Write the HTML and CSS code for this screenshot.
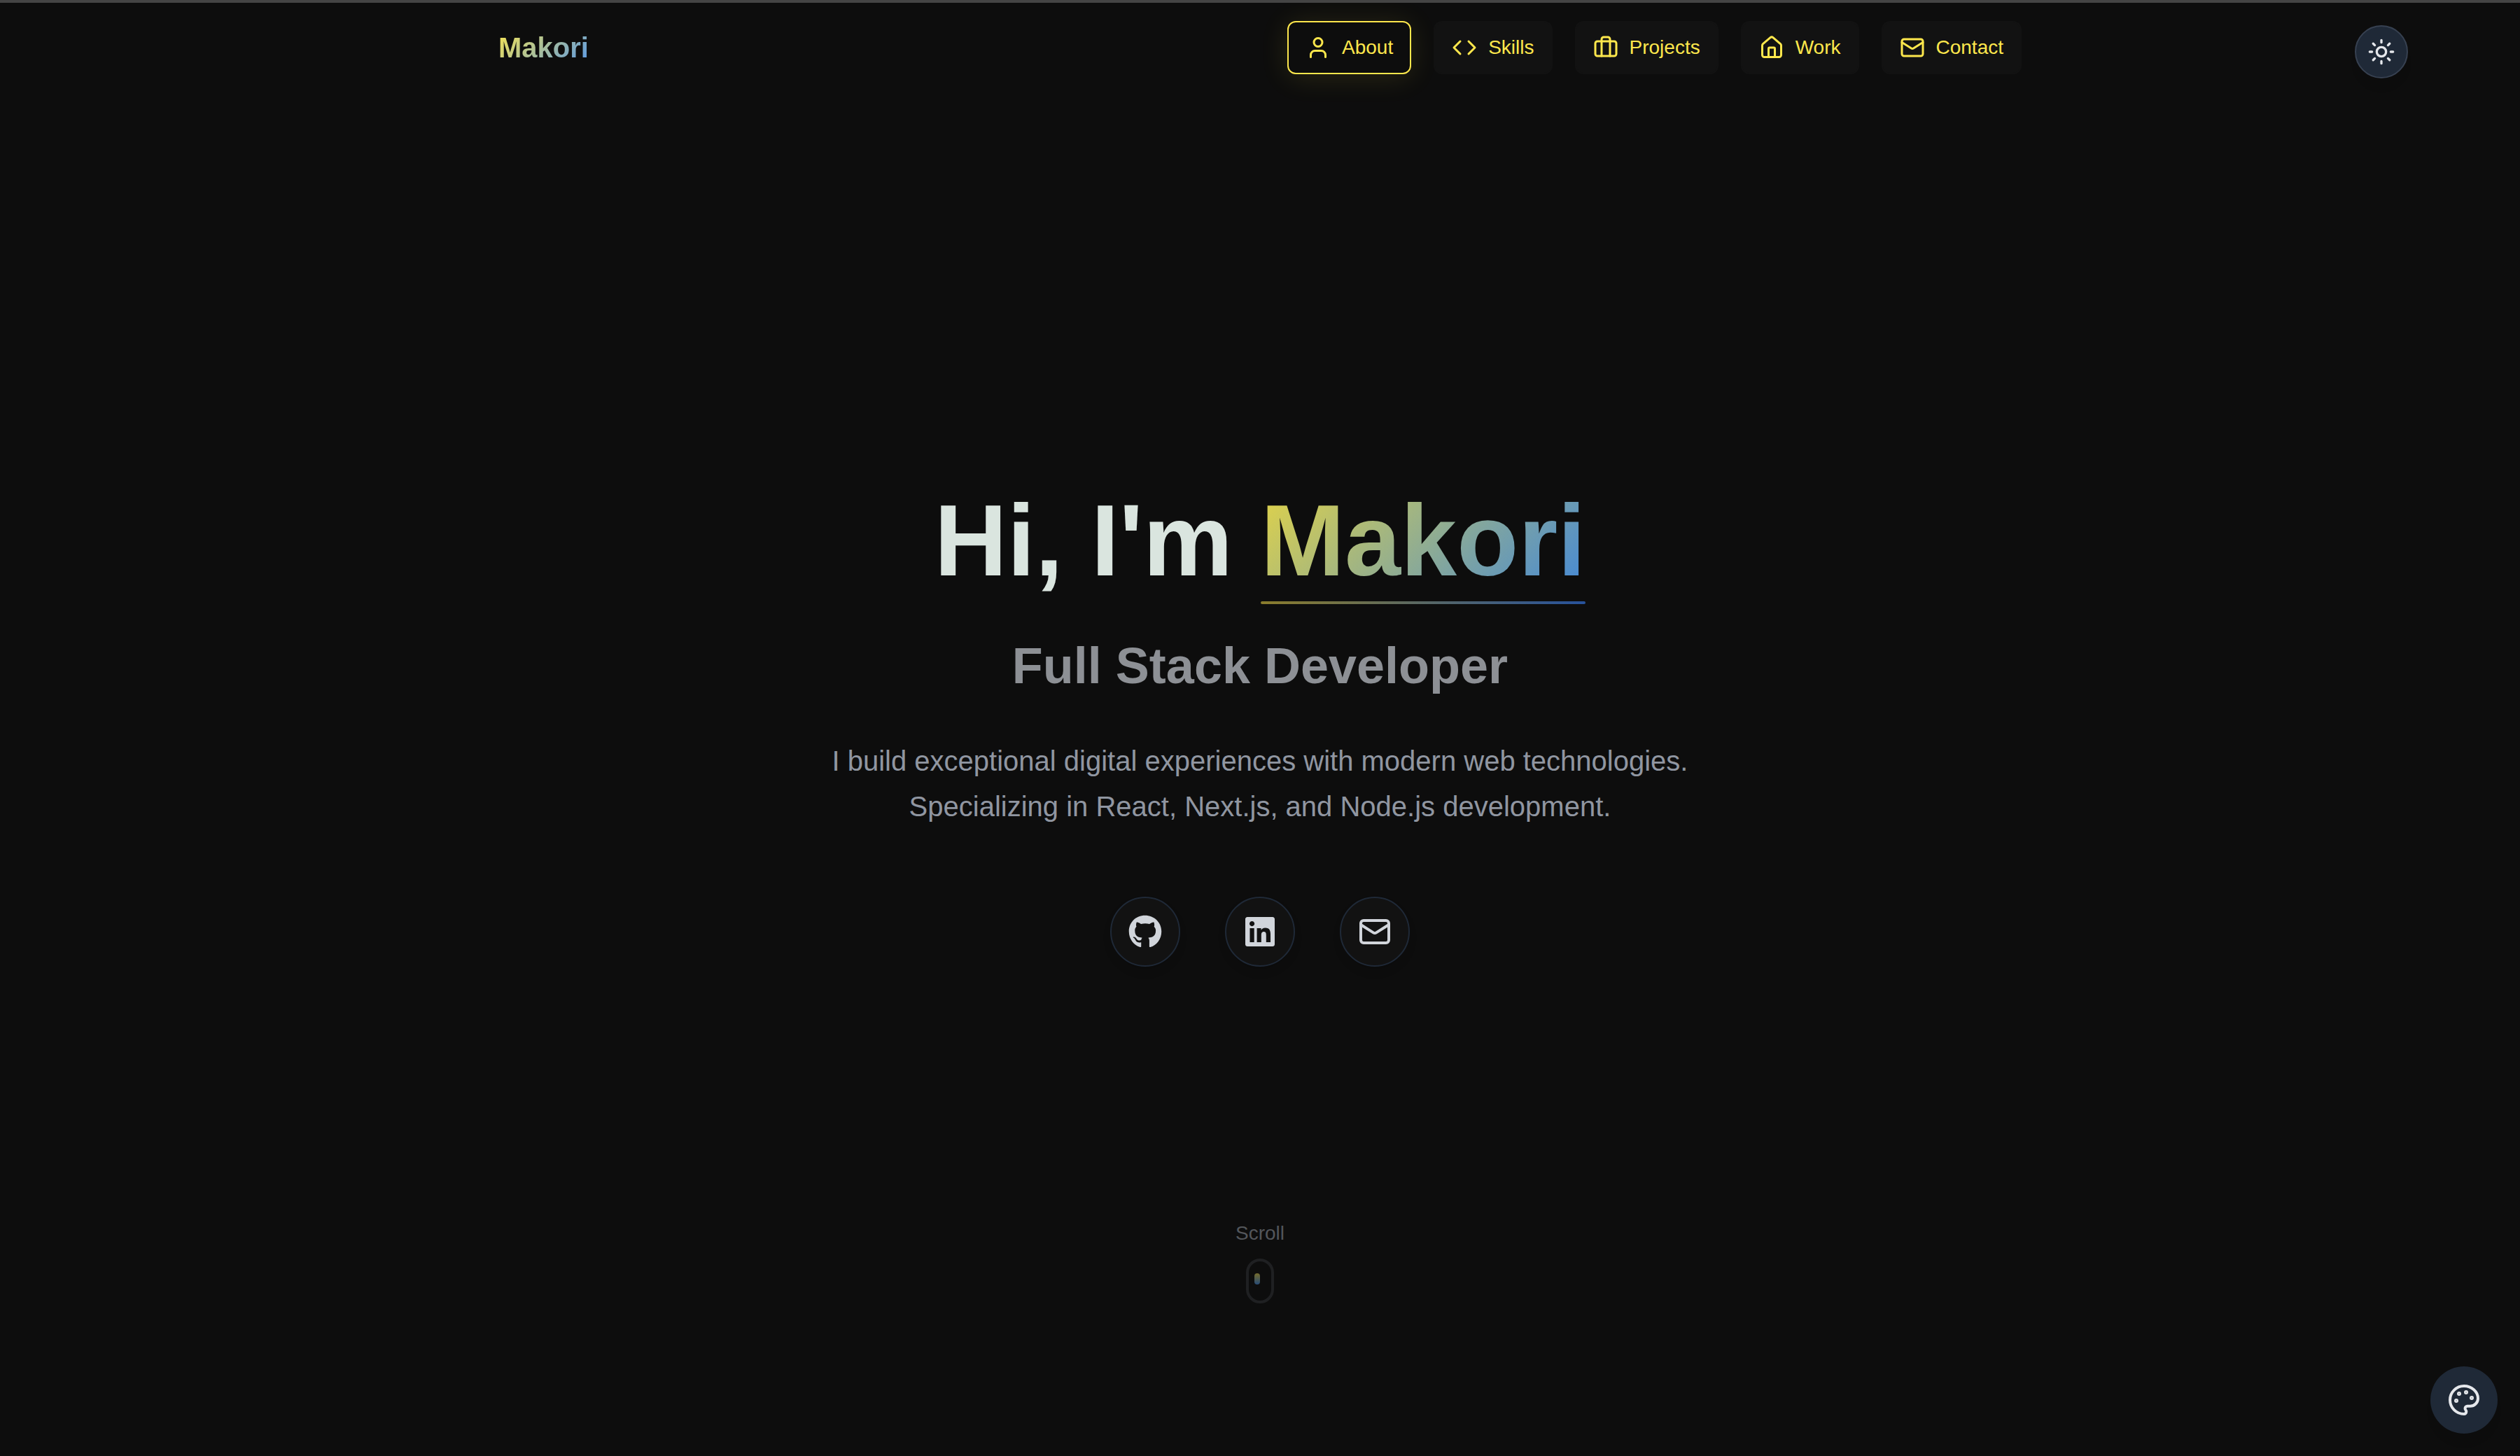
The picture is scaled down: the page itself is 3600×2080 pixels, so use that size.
FILE: index.html
```html
<!DOCTYPE html>
<html lang="en">
<head>
<meta charset="utf-8">
<meta name="viewport" content="width=device-width, initial-scale=1">
<title>Makori</title>
<link rel="stylesheet" href="styles.css">
</head>
<body>
<header class="header">
  <div class="header-inner">
    <a class="logo" href="#">Makori</a>
    <nav class="nav">
      <a class="nav-link active" href="#about">
        <svg class="icon" viewBox="0 0 24 24"><path d="M19 21v-2a4 4 0 0 0-4-4H9a4 4 0 0 0-4 4v2"/><circle cx="12" cy="7" r="4"/></svg>
        About
      </a>
      <a class="nav-link" href="#skills">
        <svg class="icon" viewBox="0 0 24 24"><path d="m16 18 6-6-6-6M8 6l-6 6 6 6"/></svg>
        Skills
      </a>
      <a class="nav-link" href="#projects">
        <svg class="icon" viewBox="0 0 24 24"><path d="M16 20V4a2 2 0 0 0-2-2h-4a2 2 0 0 0-2 2v16"/><rect x="2" y="6" width="20" height="14" rx="2"/></svg>
        Projects
      </a>
      <a class="nav-link" href="#work">
        <svg class="icon" viewBox="0 0 24 24"><path d="M15 21v-8a1 1 0 0 0-1-1h-4a1 1 0 0 0-1 1v8"/><path d="M3 10a2 2 0 0 1 .709-1.528l7-5.999a2 2 0 0 1 2.582 0l7 5.999A2 2 0 0 1 21 10v9a2 2 0 0 1-2 2H5a2 2 0 0 1-2-2z"/></svg>
        Work
      </a>
      <a class="nav-link" href="#contact">
        <svg class="icon" viewBox="0 0 24 24"><rect x="2" y="4" width="20" height="16" rx="2"/><path d="m22 7-8.97 5.7a1.94 1.94 0 0 1-2.06 0L2 7"/></svg>
        Contact
      </a>
    </nav>
  </div>
</header>
<main class="hero">
  <h1 class="title">Hi, I'm <span class="name">Makori</span></h1>
  <h2 class="role">Full Stack Developer</h2>
  <p class="intro">I build exceptional digital experiences with modern web technologies. Specializing in React, Next.js, and Node.js development.</p>
  <div class="socials">
    <a class="social" href="#github" aria-label="GitHub">
      <svg class="icon solid" viewBox="-8 0 512 512"><path d="M244.800 8C106.100 8 0 113.300 0 252c0 110.900 69.800 205.800 169.500 239.200 12.800 2.300 17.300-5.600 17.300-12.100 0-6.200-.3-40.400-.3-61.400 0 0-70 15-84.700-29.800 0 0-11.400-29.100-27.800-36.600 0 0-22.900-15.700 1.600-15.400 0 0 24.900 2 38.600 25.800 21.900 38.600 58.600 27.500 72.900 20.900 2.300-16 8.800-27.100 16-33.700-55.900-6.200-112.300-14.300-112.300-110.500 0-27.500 7.600-41.300 23.600-58.900-2.600-6.500-11.100-33.300 2.600-67.900 20.900-6.500 69 27 69 27 20-5.600 41.500-8.500 62.800-8.500s42.800 2.900 62.800 8.500c0 0 48.100-33.600 69-27 13.700 34.700 5.200 61.400 2.600 67.900 16 17.700 25.800 31.500 25.800 58.900 0 96.500-58.900 104.200-114.800 110.500 9.200 7.900 17 22.900 17 46.400 0 33.700-.3 75.400-.3 83.600 0 6.500 4.600 14.400 17.300 12.100C428.200 457.800 496 362.900 496 252 496 113.300 383.500 8 244.800 8z"/></svg>
    </a>
    <a class="social" href="#linkedin" aria-label="LinkedIn">
      <svg class="icon solid" viewBox="-32 0 512 512"><path d="M416 32H31.900C14.300 32 0 46.500 0 64.300v383.400C0 465.500 14.300 480 31.900 480H416c17.600 0 32-14.500 32-32.300V64.300c0-17.800-14.400-32.300-32-32.300zM135.400 416H69V202.200h66.500V416zm-33.200-243c-21.300 0-38.500-17.300-38.500-38.500S80.900 96 102.200 96c21.200 0 38.500 17.300 38.500 38.500 0 21.300-17.200 38.500-38.500 38.500zm282.100 243h-66.400V312c0-24.800-.5-56.700-34.500-56.700-34.600 0-39.900 27-39.900 54.900V416h-66.400V202.200h63.700v29.200h.9c8.900-16.800 30.600-34.500 62.900-34.500 67.200 0 79.700 44.300 79.700 101.900V416z"/></svg>
    </a>
    <a class="social" href="#email" aria-label="Email">
      <svg class="icon" viewBox="0 0 24 24"><rect x="2" y="4" width="20" height="16" rx="2"/><path d="m22 7-8.97 5.7a1.94 1.94 0 0 1-2.06 0L2 7"/></svg>
    </a>
  </div>
</main>
<a class="scroll" href="#about">Scroll<span class="mouse"><span class="wheel"></span></span></a>
<button class="theme" type="button" aria-label="Toggle theme">
  <svg class="icon" viewBox="0 0 24 24"><circle cx="12" cy="12" r="4"/><path d="M12 2v2M12 20v2M4.93 4.93l1.41 1.41M17.66 17.66l1.41 1.41M2 12h2M20 12h2M6.34 17.66l-1.41 1.41M19.07 4.93l-1.41 1.41"/></svg>
</button>
<button class="palette" type="button" aria-label="Choose colours">
  <svg class="icon" viewBox="0 0 24 24"><g fill="currentColor"><circle cx="13.5" cy="6.5" r=".5"/><circle cx="17.5" cy="10.5" r=".5"/><circle cx="8.5" cy="7.5" r=".5"/><circle cx="6.5" cy="12.5" r=".5"/></g><path d="M12 2C6.5 2 2 6.5 2 12s4.5 10 10 10c.926 0 1.648-.746 1.648-1.688 0-.437-.18-.835-.437-1.125-.29-.289-.438-.652-.438-1.125a1.64 1.64 0 0 1 1.668-1.668h1.996c3.051 0 5.555-2.503 5.555-5.554C21.965 6.012 17.461 2 12 2z"/></svg>
</button>
</body>
</html>
```
FILE: styles.css
```css
* { box-sizing: border-box; }

body {
  display: flex;
  flex-direction: column;
  min-height: 100vh;
  margin: 0;
  border-top: 4px solid #444;
  background: #0d0d0d;
  color: #dae5df;
  font-family: "Liberation Sans", Arial, sans-serif;
}

a { color: inherit; text-decoration: none; }

.icon {
  display: block;
  width: 36px;
  height: 36px;
  fill: none;
  stroke: currentColor;
  stroke-width: 2;
  stroke-linecap: round;
  stroke-linejoin: round;
}

.icon.solid { fill: currentColor; stroke: none; }

.header { padding: 26px 64px; }

.header-inner {
  display: flex;
  align-items: center;
  justify-content: space-between;
  max-width: 2176px;
  margin: 0 auto;
}

.logo {
  background: linear-gradient(135deg, #fae650, #5596ea);
  background-clip: text;
  -webkit-background-clip: text;
  color: transparent;
  font-size: 40px;
  font-weight: 700;
  line-height: 56px;
}

.nav { display: flex; gap: 32px; }

.nav-link {
  display: flex;
  align-items: center;
  gap: 16px;
  padding: 16px 24px;
  border: 2px solid #121212;
  border-radius: 12px;
  background: #121212;
  color: #fde74c;
  font-size: 28px;
  line-height: 40px;
}

.nav-link.active {
  border-color: #fde74c;
  background: #0d0d0d;
  box-shadow: 0 4px 40px rgba(253, 231, 76, 0.12);
}

.hero {
  display: flex;
  flex: 1;
  flex-direction: column;
  align-items: center;
  justify-content: center;
  padding: 190px 64px 0;
  text-align: center;
}

.title {
  margin: 0;
  font-size: 144px;
  line-height: 180px;
}

.name {
  position: relative;
  display: inline-block;
  background: linear-gradient(135deg, #e5d545, #3f86db);
  background-clip: text;
  -webkit-background-clip: text;
  color: transparent;
}

.name::after {
  position: absolute;
  right: 0;
  bottom: 0;
  left: 0;
  height: 4px;
  border-radius: 2px;
  background: linear-gradient(to right, #8a7c2c, #27529b);
  content: "";
}

.role {
  margin: 48px 0 0;
  color: #8d9095;
  font-size: 72px;
  line-height: 80px;
}

.intro {
  max-width: 1344px;
  margin: 64px 0 0;
  color: #9096a1;
  font-size: 40px;
  line-height: 65px;
}

.socials { display: flex; gap: 64px; margin-top: 96px; }

.social {
  padding: 24px;
  border: 2px solid #1f2937;
  border-radius: 50%;
  background: #121212;
  box-shadow: 0 8px 12px rgba(0, 0, 0, 0.1);
  color: #d1d5db;
}

.social .icon { width: 48px; height: 48px; }

.scroll {
  display: flex;
  flex-direction: column;
  align-items: center;
  gap: 16px;
  margin-bottom: 218px;
  color: #53565b;
  font-size: 28px;
  line-height: 40px;
}

.mouse {
  width: 40px;
  height: 64px;
  padding: 17px 8px;
  border: 4px solid #1f2022;
  border-radius: 20px;
}

.wheel {
  display: block;
  width: 8px;
  height: 16px;
  border-radius: 4px;
  background: linear-gradient(#766c2b, #264b78);
}

.theme,
.palette {
  position: fixed;
  border: 2px solid #374151;
  border-radius: 50%;
  background: #1f2937;
  box-shadow: 0 16px 16px -8px rgba(0, 0, 0, 0.1);
  color: #e5e7eb;
}

.theme {
  top: 36px;
  right: 160px;
  padding: 16px;
}

.theme .icon { width: 40px; height: 40px; }

.palette {
  right: 32px;
  bottom: 32px;
  padding: 24px;
  border: 0;
}

.palette .icon { width: 48px; height: 48px; }
```
